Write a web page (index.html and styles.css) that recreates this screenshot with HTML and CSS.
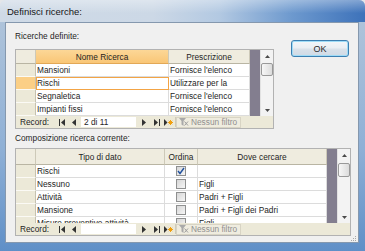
FILE: index.html
```html
<!DOCTYPE html>
<html>
<head>
<meta charset="utf-8">
<link rel="stylesheet" href="styles.css">
</head>
<body>
<div class="window">
  <div class="titlebar"><span class="title">Definisci ricerche:</span></div>
  <div class="frame-body">
    <div class="client">
      <div class="top-row">
        <div class="section">
          <div class="label">Ricerche definite:</div>
          <div class="table t1">
            <div class="grid-area">
              <div class="grid g1">
                <div class="h hsel"></div>
                <div class="h active">Nome Ricerca</div>
                <div class="h">Prescrizione</div>

                <div class="sel"></div><div class="c">Mansioni</div><div class="c">Fornisce l'elenco</div>
                <div class="sel cur"></div><div class="c focus">Rischi</div><div class="c">Utilizzare per la</div>
                <div class="sel"></div><div class="c">Segnaletica</div><div class="c">Fornisce l'elenco</div>
                <div class="sel"></div><div class="c">Impianti fissi</div><div class="c">Fornisce l'elenco</div>
              </div>
              <div class="dark"></div>
              <div class="vscroll s1">
                <div class="sb-btn"><svg width="5" height="3" viewBox="0 0 5 3"><path d="M0 3L2.5 0L5 3Z" fill="#4a4a4a"/></svg></div>
                <div class="thumb"></div>
                <div class="sb-track"></div>
                <div class="sb-btn"><svg width="5" height="3" viewBox="0 0 5 3"><path d="M0 0L2.5 3L5 0Z" fill="#4a4a4a"/></svg></div>
              </div>
            </div>
            <div class="nav">
              <span class="rec">Record:</span>
              <svg class="ic i-first" width="6" height="7" viewBox="0 0 6 7"><rect x="0" y="0" width="1" height="7" fill="#333"/><path d="M6 0L2 3.5L6 7Z" fill="#333"/></svg>
              <svg class="ic i-prev" width="4" height="7" viewBox="0 0 4 7"><path d="M4 0L0 3.5L4 7Z" fill="#333"/></svg>
              <span class="pos">2 di 11</span>
              <svg class="ic i-next" width="4" height="7" viewBox="0 0 4 7"><path d="M0 0L4 3.5L0 7Z" fill="#333"/></svg>
              <svg class="ic i-last" width="6" height="7" viewBox="0 0 6 7"><path d="M0 0L4 3.5L0 7Z" fill="#333"/><rect x="5" y="0" width="1" height="7" fill="#333"/></svg>
              <svg class="ic i-new" width="9" height="7" viewBox="0 0 9 7"><path d="M0 0L3.5 3.5L0 7Z" fill="#333"/><path d="M6.5 1v5M4 3.5h5M4.8 1.8l3.4 3.4M8.2 1.8l-3.4 3.4" stroke="#f0a010" stroke-width="1"/></svg>
              <span class="sep"></span>
              <span class="filter"><svg width="10" height="8" viewBox="0 0 10 8"><path d="M0 0h7L4.5 3V8L2.5 6.5V3Z" fill="#a9a9a9"/><path d="M5.5 3.5l3.5 4M9 3.5l-3.5 4" stroke="#9c9c9c" stroke-width="1"/></svg><span>Nessun filtro</span></span>
            </div>
          </div>
        </div>
        <button class="ok">OK</button>
      </div>

      <div class="label l2">Composizione ricerca corrente:</div>
      <div class="table t2">
        <div class="grid-area">
          <div class="grid g2">
            <div class="h hsel"></div>
            <div class="h">Tipo di dato</div>
            <div class="h">Ordina</div>
            <div class="h">Dove cercare</div>

            <div class="sel"></div><div class="c">Rischi</div><div class="c cbc"><span class="cb"><svg width="8" height="8" viewBox="0 0 8 8"><path d="M1 4l2 2.5L7 1" stroke="#21519e" stroke-width="1.4" fill="none"/></svg></span></div><div class="c"></div>
            <div class="sel"></div><div class="c">Nessuno</div><div class="c cbc"><span class="cb"></span></div><div class="c">Figli</div>
            <div class="sel"></div><div class="c">Attività</div><div class="c cbc"><span class="cb"></span></div><div class="c">Padri + Figli</div>
            <div class="sel"></div><div class="c">Mansione</div><div class="c cbc"><span class="cb"></span></div><div class="c">Padri + Figli dei Padri</div>
            <div class="sel"></div><div class="c">Misure preventive attività</div><div class="c cbc"><span class="cb"></span></div><div class="c">Figli</div>
          </div>
          <div class="dark"></div>
          <div class="vscroll s2">
            <div class="sb-btn"><svg width="5" height="3" viewBox="0 0 5 3"><path d="M0 3L2.5 0L5 3Z" fill="#4a4a4a"/></svg></div>
            <div class="thumb"></div>
            <div class="sb-track"></div>
            <div class="sb-btn"><svg width="5" height="3" viewBox="0 0 5 3"><path d="M0 0L2.5 3L5 0Z" fill="#4a4a4a"/></svg></div>
          </div>
        </div>
        <div class="nav">
          <span class="rec">Record:</span>
          <svg class="ic i-first" width="6" height="7" viewBox="0 0 6 7"><rect x="0" y="0" width="1" height="7" fill="#333"/><path d="M6 0L2 3.5L6 7Z" fill="#333"/></svg>
          <svg class="ic i-prev" width="4" height="7" viewBox="0 0 4 7"><path d="M4 0L0 3.5L4 7Z" fill="#333"/></svg>
          <span class="pos"></span>
          <svg class="ic i-next" width="4" height="7" viewBox="0 0 4 7"><path d="M0 0L4 3.5L0 7Z" fill="#333"/></svg>
          <svg class="ic i-last" width="6" height="7" viewBox="0 0 6 7"><path d="M0 0L4 3.5L0 7Z" fill="#333"/><rect x="5" y="0" width="1" height="7" fill="#333"/></svg>
          <svg class="ic i-new" width="9" height="7" viewBox="0 0 9 7"><path d="M0 0L3.5 3.5L0 7Z" fill="#333"/><path d="M6.5 1v5M4 3.5h5M4.8 1.8l3.4 3.4M8.2 1.8l-3.4 3.4" stroke="#f0a010" stroke-width="1"/></svg>
          <span class="sep"></span>
          <span class="filter"><svg width="10" height="8" viewBox="0 0 10 8"><path d="M0 0h7L4.5 3V8L2.5 6.5V3Z" fill="#a9a9a9"/><path d="M5.5 3.5l3.5 4M9 3.5l-3.5 4" stroke="#9c9c9c" stroke-width="1"/></svg><span>Nessun filtro</span></span>
        </div>
      </div>
      <div class="footer">
        <svg width="6" height="6" viewBox="0 0 6 6"><g fill="#a8a8a8"><rect x="4" y="0" width="1" height="1"/><rect x="2" y="2" width="1" height="1"/><rect x="4" y="2" width="1" height="1"/><rect x="0" y="4" width="1" height="1"/><rect x="2" y="4" width="1" height="1"/><rect x="4" y="4" width="1" height="1"/></g></svg>
      </div>
    </div>
  </div>
</div>
</body>
</html>
```
FILE: styles.css
```css
* { box-sizing: border-box; }
html, body { margin: 0; padding: 0; }
body {
  width: 365px;
  height: 251px;
  overflow: hidden;
  background: #e4e6e9;
  font-family: "Liberation Sans", Arial, sans-serif;
  font-size: 8.3px;
  color: #1e1e1e;
}
.window {
  width: 365px;
  height: 251px;
  display: flex;
  flex-direction: column;
  border-radius: 6px 6px 0 0;
  overflow: hidden;
}
.titlebar {
  height: 22px;
  flex: none;
  display: flex;
  align-items: center;
  padding: 1px 0 0 7px;
  font-size: 9.5px;
  color: #161616;
  background:
    linear-gradient(to bottom, rgba(255,255,255,0.35) 0%, rgba(255,255,255,0) 60%),
    linear-gradient(to right, #cfdae6 0%, #ccd8e6 42%, #b3c9e2 60%, #6d99ce 80%, #3d72ba 100%);
}
.frame-body {
  flex: 1;
  display: flex;
  padding: 0 6px 9px 5px;
  background: linear-gradient(to bottom, #aec3da 0%, #8fb0d6 55%, #5f8fc7 100%);
}
.client {
  flex: 1;
  display: flex;
  flex-direction: column;
  background: #f0f0f0;
  border: 1px solid #8598ae;
  padding: 8px 7px 0 9px;
}
.top-row {
  display: flex;
  justify-content: space-between;
  align-items: flex-start;
}
.section { width: 259px; }
.label {
  height: 11px;
  line-height: 11px;
  white-space: nowrap;
}
.t1 { margin-top: 7px; width: 259px; }
.l2 { margin-top: 4px; }
.t2 { margin-top: 4px; width: 336px; }

.table {
  border: 1px solid #b2b2b2;
  background: #fff;
  display: flex;
  flex-direction: column;
}
.grid-area { display: flex; }
.grid { display: grid; }
.g1 {
  grid-template-columns: 20px 133px 81px;
  grid-template-rows: 14px;
  grid-auto-rows: 13px;
}
.g2 {
  grid-template-columns: 20px 129px 33px 129px;
  grid-template-rows: 16px;
  grid-auto-rows: 13px;
  height: 74px;
  overflow: hidden;
}
.h {
  background: #efecdf;
  border-right: 1px solid #cdc9b8;
  border-bottom: 1px solid #b9b5a3;
  display: flex;
  align-items: center;
  justify-content: center;
  white-space: nowrap;
  line-height: 12px;
}
.h.active {
  background: linear-gradient(to bottom, #fcd797 0%, #f9c676 100%);
  border-bottom-color: #e2a856;
}
.c {
  background: #fff;
  border-right: 1px solid #dcdcdc;
  border-bottom: 1px solid #dcdcdc;
  padding-left: 1px;
  line-height: 12px;
  white-space: nowrap;
  overflow: hidden;
}
.sel {
  background: #ece9d8;
  border-right: 1px solid #c5c1b0;
  border-bottom: 1px solid #fbfaf5;
}
.sel.cur { background: #fbcf86; }
.focus {
  outline: 1px solid #f3a445;
  outline-offset: -1px;
}
.cbc {
  display: flex;
  align-items: center;
  justify-content: center;
  padding-left: 0;
}
.cb {
  width: 10px;
  height: 10px;
  border: 1px solid #8f9090;
  background: linear-gradient(135deg, #d6d6d6 0%, #f6f6f6 100%);
  display: flex;
  align-items: center;
  justify-content: center;
}
.cb svg { display: block; }
.dark {
  width: 10px;
  background: #837e8f;
}
.vscroll {
  width: 13px;
  background: #f3f3f3;
  border-left: 1px solid #e2e2e2;
  display: flex;
  flex-direction: column;
}
.sb-btn {
  height: 12px;
  display: flex;
  align-items: center;
  justify-content: center;
  flex: none;
}
.sb-btn svg { display: block; }
.thumb {
  flex: none;
  height: 13px;
  margin: 1px 0 0 0;
  border: 1px solid #999;
  border-radius: 2px;
  background: linear-gradient(to right, #f7f7f7, #dcdcdc);
}
.s2 .thumb { margin-top: 2px; height: 14px; }
.sb-track { flex: 1; }

.nav {
  height: 12px;
  background: #ece9d8;
  display: flex;
  align-items: center;
  white-space: nowrap;
}
.nav .ic { display: block; flex: none; }
.rec { margin-left: 4px; width: 39px; }
.i-prev { margin-left: 7px; }
.pos {
  margin-left: 5px;
  width: 55px;
  height: 10px;
  background: #fff;
  padding-left: 3px;
  line-height: 10px;
}
.i-next { margin-left: 6px; }
.i-last { margin-left: 8px; }
.i-new { margin-left: 4px; }
.sep {
  margin-left: 2px;
  width: 1px;
  height: 10px;
  background: #cfcbba;
}
.filter {
  width: 65px;
  height: 11px;
  display: flex;
  align-items: center;
  gap: 2px;
  padding-left: 2px;
  color: #8f8f8f;
  border: 1px solid #d8d4c4;
  background: #efecdf;
}
.filter svg { display: block; flex: none; }

.ok {
  width: 58px;
  height: 17px;
  margin: 9px 2px 0 0;
  padding: 0;
  border: 1px solid #3c7fb1;
  border-radius: 3px;
  background: linear-gradient(to bottom, #f3f6f9 0%, #e9eef3 48%, #dae2ea 52%, #d0dae5 100%);
  box-shadow: inset 0 0 0 1px #9fdcf7;
  font-family: "Liberation Sans", Arial, sans-serif;
  font-size: 9px;
  color: #2a2a2a;
}
.footer {
  flex: 1;
  display: flex;
  justify-content: flex-end;
  align-items: flex-end;
  margin-right: -6px;
  padding-bottom: 0;
}
.footer svg { display: block; }
```
